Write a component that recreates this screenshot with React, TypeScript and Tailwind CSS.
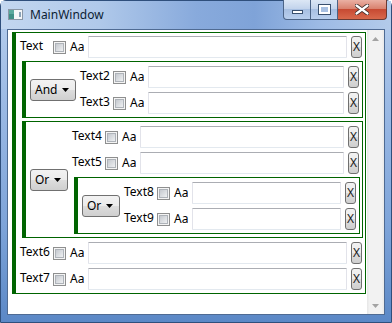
import React from "react";

function CheckBox() {
  return (
    <div className="w-[13px] h-[13px] shrink-0 border border-[#8e8f8f] bg-[#f4f4f4] p-[1px]">
      <div className="w-full h-full border border-[#aeb3b9] bg-[linear-gradient(135deg,#c5c9cf,#eef0f2)]" />
    </div>
  );
}

function XButton() {
  return (
    <div className="w-[11px] h-[22px] shrink-0 ml-[4px] rounded-[3px] border border-[#707070] bg-[linear-gradient(#f2f2f2,#ebebeb_50%,#dddddd_50%,#cfcfcf)] flex items-center justify-center text-[12px] leading-none text-[#1a1a1a]">
      X
    </div>
  );
}

function TextBox() {
  return (
    <div className="flex-1 h-[22px] border border-[#e2e3ea] border-t-[#abadb3] border-b-[#e3e9ef] bg-white rounded-[1px]" />
  );
}

function Row({ label }: { label: string }) {
  return (
    <div className="flex items-center h-[22px] my-[2px] pr-[3px]">
      <div className="w-[37px] shrink-0 pl-[4px] leading-none whitespace-nowrap -mt-[2px]">{label}</div>
      <CheckBox />
      <div className="w-[18px] shrink-0 ml-[4px] leading-none">Aa</div>
      <TextBox />
      <XButton />
    </div>
  );
}

function Combo({ text, w }: { text: string; w: string }) {
  return (
    <div
      className={
        "self-center shrink-0 ml-[4px] h-[22px] rounded-[3px] border border-[#707070] bg-[linear-gradient(#f2f2f2,#ebebeb_50%,#dddddd_50%,#cfcfcf)] flex items-center pl-[4px] " +
        w
      }
    >
      <span className="leading-none">{text}</span>
      <svg width="7" height="4" viewBox="0 0 7 4" className="ml-auto mr-[6px]">
        <path d="M0 0H7L3.5 4Z" fill="#000" />
      </svg>
    </div>
  );
}

function Group({
  combo,
  children,
  outer,
}: {
  combo?: React.ReactNode;
  children: React.ReactNode;
  outer?: boolean;
}) {
  return (
    <div
      className={
        outer
          ? "flex border border-[#006400] border-l-[4px] pt-[1px] pb-[1px]"
          : "flex border border-[#006400] border-l-[4px] pt-[2px] pb-[1px] ml-[6px] mr-[2px] mt-[1px] mb-[2px]"
      }
    >
      {combo}
      <div className="flex-1 flex flex-col min-w-0">{children}</div>
    </div>
  );
}

function WinIcon() {
  return (
    <svg width="15" height="11" viewBox="0 0 15 11">
      <rect x="0.5" y="0.5" width="14" height="10" fill="#f4f6f8" stroke="#8a97a6" />
      <rect x="1" y="1" width="5" height="9" fill="#3f8f86" />
      <rect x="1" y="1" width="5" height="4" fill="#5aa99e" />
      <rect x="11" y="3" width="2" height="5" fill="#8aa3b8" />
    </svg>
  );
}

function CaptionButtons() {
  return (
    <div className="ml-auto mr-[4px] -mt-[1px] self-start flex h-[20px]">
      <div className="w-[28px] h-full rounded-bl-[4px] border border-[#4c6487] border-t-0 bg-[linear-gradient(#dce7f5,#c3d4ec_45%,#a8c0e2_50%,#b9cfee)] flex items-center justify-center">
        <div className="w-[11px] h-[4px] bg-white border border-[#39506f] mt-[4px]" />
      </div>
      <div className="w-[27px] h-full border-y border-r border-[#4c6487] border-t-0 bg-[linear-gradient(#dce7f5,#c3d4ec_45%,#a8c0e2_50%,#b9cfee)] flex items-center justify-center">
        <div className="w-[11px] h-[9px] border-[2px] border-white outline outline-1 outline-[#39506f] bg-[#a8c0e2]" />
      </div>
      <div className="w-[49px] h-full rounded-br-[4px] border-y border-r border-[#6b3a33] border-t-0 bg-[linear-gradient(#eab0a3,#d9826f_45%,#c74a33_50%,#d8694c)] flex items-center justify-center">
        <svg width="14" height="11" viewBox="0 0 14 11">
          <path d="M1.5 1.5L12.5 9.5M12.5 1.5L1.5 9.5" stroke="#3b2a28" strokeWidth="4" strokeLinecap="round" />
          <path d="M1.5 1.5L12.5 9.5M12.5 1.5L1.5 9.5" stroke="#fff" strokeWidth="2.2" strokeLinecap="round" />
        </svg>
      </div>
    </div>
  );
}

export default function App() {
  return (
    <div className="w-[392px] h-[323px] overflow-hidden bg-white font-['Segoe_UI','Noto_Sans',sans-serif] text-[12px] text-black">
      <div className="w-full h-full flex flex-col rounded-t-[6px] border border-[#2f4f7c] bg-[linear-gradient(180deg,#b9d0ee,#9dbbe5_30%,#7ea4d9_70%,#5b88c6)]">
        <div className="h-[28px] shrink-0 flex items-start bg-[linear-gradient(90deg,#c3d7f0,#b0c9ea_25%,#88aadc_50%,#7fa3d8_65%,#9dbbe5_82%,#b3cbea)]">
          <div className="ml-[7px] mt-[8px]">
            <WinIcon />
          </div>
          <div className="ml-[7px] mt-[6px] text-[12px] text-[#0c1d33] leading-[16px]">MainWindow</div>
          <CaptionButtons />
        </div>
        <div className="flex-1 flex px-[6px] pb-[7px] min-h-0">
          <div className="flex-1 flex border border-[#4f6b93] bg-white">
            <div className="flex-1 flex flex-col pl-[4px] pr-[1px] pt-[2px] min-w-0">
              <Group outer>
                <Row label="Text" />
                <Group combo={<Combo text="And" w="w-[46px]" />}>
                  <Row label="Text2" />
                  <Row label="Text3" />
                </Group>
                <Group combo={<Combo text="Or" w="w-[38px]" />}>
                  <Row label="Text4" />
                  <Row label="Text5" />
                  <Group combo={<Combo text="Or" w="w-[38px]" />}>
                    <Row label="Text8" />
                    <Row label="Text9" />
                  </Group>
                </Group>
                <Row label="Text6" />
                <Row label="Text7" />
              </Group>
            </div>
            <div className="w-[17px] shrink-0 flex flex-col justify-between bg-[linear-gradient(90deg,#e6e6e6,#f2f2f2_15%,#f2f2f2_85%,#e9e9e9)]">
              <div className="h-[17px] flex items-center justify-center">
                <svg width="7" height="4" viewBox="0 0 7 4">
                  <path d="M3.5 0L7 4H0Z" fill="#a3a3a3" />
                </svg>
              </div>
              <div className="h-[17px] flex items-center justify-center">
                <svg width="7" height="4" viewBox="0 0 7 4">
                  <path d="M0 0H7L3.5 4Z" fill="#a3a3a3" />
                </svg>
              </div>
            </div>
          </div>
        </div>
      </div>
    </div>
  );
}
